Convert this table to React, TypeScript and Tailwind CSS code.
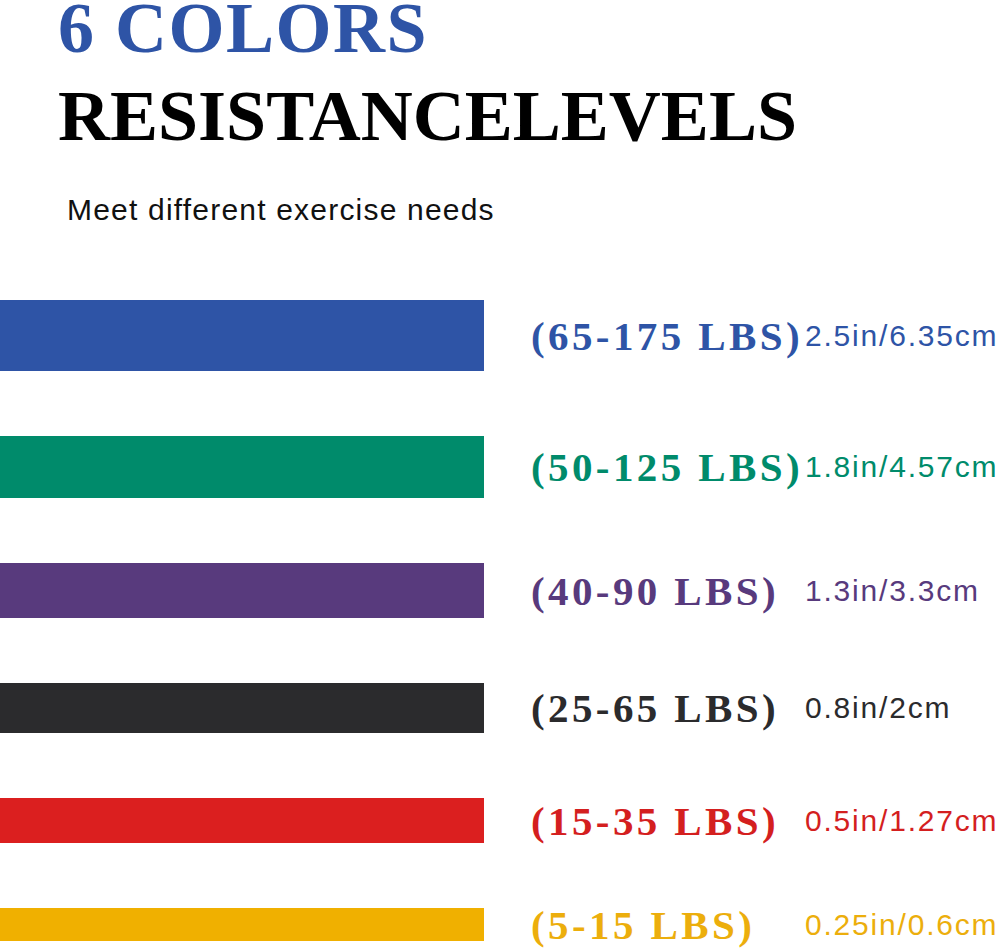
import React from "react";

type Row = {
  bar: string;
  text: string;
  h: string;
  label: string;
  size: string;
};

const rows: Row[] = [
  { bar: "bg-[#2e54a6]", text: "text-[#2e54a6]", h: "h-[71px]", label: "(65-175 LBS)", size: "2.5in/6.35cm" },
  { bar: "bg-[#008b6b]", text: "text-[#008b6b]", h: "h-[62px]", label: "(50-125 LBS)", size: "1.8in/4.57cm" },
  { bar: "bg-[#583a7d]", text: "text-[#583a7d]", h: "h-[55px]", label: "(40-90 LBS)", size: "1.3in/3.3cm" },
  { bar: "bg-[#2b2b2d]", text: "text-[#2b2b2d]", h: "h-[50px]", label: "(25-65 LBS)", size: "0.8in/2cm" },
  { bar: "bg-[#db1f1f]", text: "text-[#d41f1f]", h: "h-[45px]", label: "(15-35 LBS)", size: "0.5in/1.27cm" },
  { bar: "bg-[#f0b000]", text: "text-[#ecae0c]", h: "h-[33px]", label: "(5-15 LBS)", size: "0.25in/0.6cm" },
];

export default function App() {
  return (
    <div className="w-[1000px] h-[951px] bg-white overflow-hidden">
      <div className="pl-[58px] font-['Liberation_Serif',serif] font-bold">
        <div className="text-[72px] leading-[56px] tracking-[1.5px] text-[#2e54a6] whitespace-nowrap">
          6 COLORS
        </div>
        <div className="mt-[32px] text-[72px] leading-[56px] tracking-[0px] text-black whitespace-nowrap">
          RESISTANCELEVELS
        </div>
      </div>
      <div className="mt-[51px] pl-[67px] font-['Liberation_Sans',sans-serif] text-[30px] leading-[30px] tracking-[1.2px] text-[#111] whitespace-nowrap">
        Meet different exercise needs
      </div>
      <div className="mt-[75px] flex flex-col gap-[65px]">
        {rows.map((r) => (
          <div key={r.label} className="flex items-center">
            <div className={`w-[484px] ${r.h} ${r.bar} shrink-0`} />
            <div
              className={`ml-[47px] w-[274px] shrink-0 font-['Liberation_Serif',serif] font-bold text-[41px] leading-[30px] tracking-[3.4px] whitespace-nowrap ${r.text}`}
            >
              {r.label}
            </div>
            <div
              className={`font-['Liberation_Sans',sans-serif] text-[30px] leading-[30px] tracking-[1.8px] whitespace-nowrap ${r.text}`}
            >
              {r.size}
            </div>
          </div>
        ))}
      </div>
    </div>
  );
}
